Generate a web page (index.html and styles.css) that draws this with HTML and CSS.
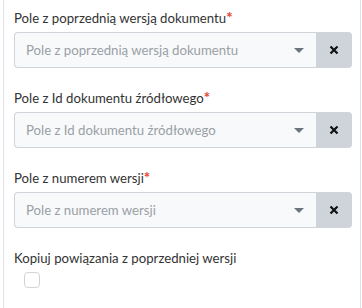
FILE: index.html
```html
<!DOCTYPE html>
<html lang="pl">
<head>
    <meta charset="UTF-8">
    <meta name="viewport" content="width=device-width, initial-scale=1.0">
    <title>Nowa wersja dokumentu</title>
    <link rel="stylesheet" href="styles.css">
</head>
<body>
    <div class="form-panel">
        <div class="form-field">
            <label class="field-label">Pole z poprzednią wersją dokumentu<span class="required">*</span></label>
            <div class="select-group">
                <div class="select-box">
                    <span class="placeholder">Pole z poprzednią wersją dokumentu</span>
                    <span class="caret"></span>
                </div>
                <button class="clear-btn" type="button">
                    <svg width="10" height="10" viewBox="0 0 10 10"><path d="M1.5 1.5 L8.5 8.5 M8.5 1.5 L1.5 8.5" stroke="#111" stroke-width="2.2"/></svg>
                </button>
            </div>
        </div>

        <div class="form-field">
            <label class="field-label">Pole z Id dokumentu źródłowego<span class="required">*</span></label>
            <div class="select-group">
                <div class="select-box">
                    <span class="placeholder">Pole z Id dokumentu źródłowego</span>
                    <span class="caret"></span>
                </div>
                <button class="clear-btn" type="button">
                    <svg width="10" height="10" viewBox="0 0 10 10"><path d="M1.5 1.5 L8.5 8.5 M8.5 1.5 L1.5 8.5" stroke="#111" stroke-width="2.2"/></svg>
                </button>
            </div>
        </div>

        <div class="form-field">
            <label class="field-label">Pole z numerem wersji<span class="required">*</span></label>
            <div class="select-group">
                <div class="select-box">
                    <span class="placeholder">Pole z numerem wersji</span>
                    <span class="caret"></span>
                </div>
                <button class="clear-btn" type="button">
                    <svg width="10" height="10" viewBox="0 0 10 10"><path d="M1.5 1.5 L8.5 8.5 M8.5 1.5 L1.5 8.5" stroke="#111" stroke-width="2.2"/></svg>
                </button>
            </div>
        </div>

        <div class="form-field">
            <label class="field-label">Kopiuj powiązania z poprzedniej wersji</label>
            <div class="check-row">
                <span class="checkbox"></span>
            </div>
        </div>
    </div>
</body>
</html>
```

FILE: styles.css
```css
body {
    margin: 0;
    font-family: 'Lato', 'Open Sans', sans-serif;
    font-size: 13.2px;
    color: #333;
    background-color: #fff;
}
.form-panel {
    margin-left: 3px;
    width: 338px;
    min-height: 300px;
    padding: 8px 8px 0 10px;
    border-left: 1px solid #dee2e6;
    border-right: 1px solid #dee2e6;
}
.form-field {
    margin-bottom: 20px;
}
.field-label {
    display: block;
    height: 21px;
    line-height: 21px;
    margin-bottom: 3px;
}
.required {
    color: #e74c3c;
    font-weight: 900;
    font-size: 15px;
    line-height: 0;
}
.select-group {
    display: flex;
    height: 36px;
}
.select-box {
    flex: 1;
    display: flex;
    align-items: center;
    padding: 0 12px 0 11px;
    background-color: #f8f9fa;
    border: 1px solid #ced4da;
    border-right: none;
    border-radius: 4px 0 0 4px;
}
.placeholder {
    flex: 1;
    color: #9aa0a6;
}
.caret {
    width: 0;
    height: 0;
    border-left: 5px solid transparent;
    border-right: 5px solid transparent;
    border-top: 5px solid #6c757d;
}
.clear-btn {
    width: 36px;
    border: none;
    background-color: #ced4da;
    border-radius: 0 4px 4px 0;
    display: flex;
    align-items: center;
    justify-content: center;
    padding: 0;
}
.check-row {
    padding: 0 0 0 10px;
}
.checkbox {
    display: block;
    width: 14px;
    height: 14px;
    border: 1px solid #ced4da;
    border-radius: 4px;
    background-color: #fff;
}
```
